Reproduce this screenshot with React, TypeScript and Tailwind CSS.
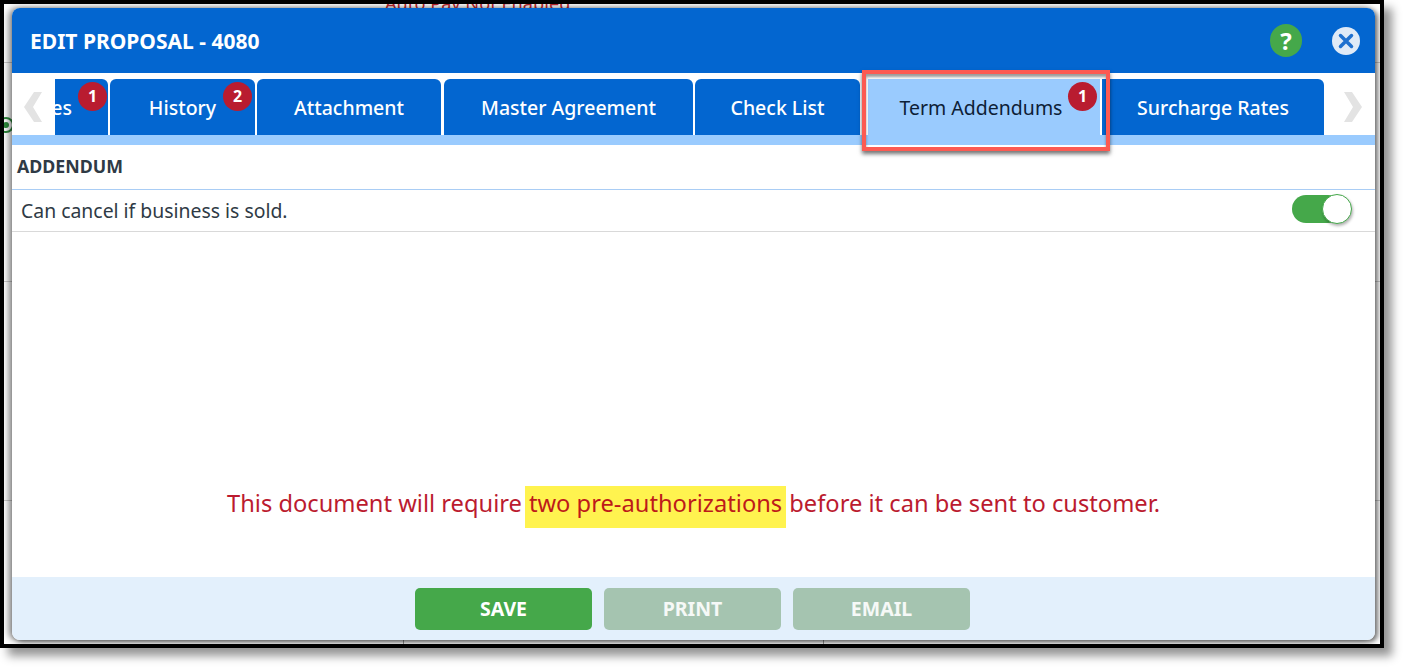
const TABS = [
  { label: "History", width: "w-[145px]", badge: "2", badgeClass: "left-[113px]" },
  { label: "Attachment", width: "w-[184px]" },
  { label: "Master Agreement", width: "ml-px w-[249px]" },
  { label: "Check List", width: "w-[165px]" },
];

function Badge({ value, className }: { value: string; className: string }) {
  return (
    <span
      className={`absolute top-[3px] flex h-[29px] w-[29px] items-center justify-center rounded-full bg-[#b91c30] pb-[2px] text-[16px] font-bold text-white ${className}`}
    >
      {value}
    </span>
  );
}

function Chevron({ flip }: { flip?: boolean }) {
  return (
    <svg width="18" height="30" viewBox="0 0 18 30" className={flip ? "rotate-180" : ""}>
      <path d="M10 0H18L9 15 18 30H10L0 15Z" fill="#e3e3e3" />
    </svg>
  );
}

function FooterButton({ label, disabled }: { label: string; disabled?: boolean }) {
  return (
    <button
      className={`h-[42px] w-[177px] rounded-[5px] text-[19.5px] font-bold ${
        disabled ? "bg-[#a5c4b0] text-white/90" : "bg-[#45a84a] text-white"
      }`}
    >
      {label}
    </button>
  );
}

export default function App() {
  return (
    <div className="h-[668px] w-[1404px] overflow-hidden bg-white font-['Noto_Sans','Open_Sans',sans-serif]">
      <div className="relative h-[648px] w-[1384px] overflow-hidden border-4 border-black bg-white px-2 pt-1 pb-1 shadow-[8px_8px_9px_rgba(0,0,0,0.42)]">
        {/* page behind the dialog */}
        <span className="absolute top-[-14px] left-[381px] text-[18.2px] whitespace-nowrap text-[#c0272d]">
          Auto Pay Not Enabled
        </span>
        <span className="absolute top-[113px] left-[-6px] flex h-[16px] w-[16px] items-center justify-center rounded-full border-[2px] border-[#2e8b3d] bg-white">
          <span className="h-[6px] w-[6px] rounded-full bg-[#2e8b3d]" />
        </span>
        <span className="absolute top-[58px] left-0 h-px w-full bg-[#cccccc]" />
        <span className="absolute top-[277px] left-0 h-px w-full bg-[#cccccc]" />
        <span className="absolute top-[496px] left-0 h-px w-full bg-[#cccccc]" />
        <span className="absolute top-[636px] left-[399px] h-[4px] w-px bg-[#999999]" />
        <span className="absolute top-[636px] left-[819px] h-[4px] w-px bg-[#999999]" />

        <div className="relative flex h-[632px] w-[1363px] flex-col overflow-hidden rounded-[8px] bg-white shadow-[-3px_0_7px_rgba(0,0,0,0.5),3px_2px_5px_rgba(0,0,0,0.5)]">
          <header className="flex h-[65px] shrink-0 items-center justify-between bg-[#0366d0] pr-[15px] pl-[18px]">
            <h1 className="pt-[2px] text-[21px] font-bold text-white">EDIT PROPOSAL - 4080</h1>
            <div className="flex items-center gap-[30px]">
              <span className="flex h-[33px] w-[32px] items-center justify-center rounded-full bg-[#45a84a] text-[24px] font-bold text-white">
                ?
              </span>
              <svg width="28" height="28" viewBox="0 0 28 28">
                <circle cx="14" cy="14" r="14" fill="#dfeaf7" />
                <path d="M8.5 8.5 19.5 19.5M19.5 8.5 8.5 19.5" stroke="#1f70cf" strokeWidth="3.5" strokeLinecap="round" />
              </svg>
            </div>
          </header>

          <nav className="flex h-[62px] shrink-0 items-end">
            <div className="flex h-[56px] w-[43px] shrink-0 items-center justify-center pr-[1px]">
              <Chevron />
            </div>
            <div className="flex h-[56px] w-[1269px] gap-[2px] overflow-hidden">
              <div className="relative ml-[-88px] flex w-[141px] shrink-0 items-center justify-end rounded-tr-[6px] bg-[#0366d0] pt-px pr-[36px] text-[19.5px] font-medium text-white">
                Notes
                <Badge value="1" className="left-[111px]" />
              </div>
              {TABS.map((tab) => (
                <div
                  key={tab.label}
                  className={`relative flex shrink-0 items-center justify-center rounded-t-[6px] bg-[#0366d0] pt-px text-[19.5px] font-medium text-white ${tab.width}`}
                >
                  {tab.label}
                  {tab.badge && <Badge value={tab.badge} className={tab.badgeClass ?? ""} />}
                </div>
              ))}
              <div className="relative ml-[6px] flex w-[232px] shrink-0 items-center justify-center bg-[#9aCBFE] pt-px pr-[6px] text-[19.5px] text-[#0d2036]">
                Term Addendums
                <Badge value="1" className="left-[200px]" />
              </div>
              <div className="flex w-[222px] shrink-0 items-center justify-center rounded-tr-[6px] bg-[#0366d0] pt-px text-[19.5px] font-medium text-white">
                Surcharge Rates
              </div>
            </div>
            <div className="flex h-[56px] flex-1 items-center justify-center pl-[6px]">
              <Chevron flip />
            </div>
          </nav>
          <div className="h-[10px] shrink-0 bg-[#9aCBFE]" />

          <div className="flex h-[45px] shrink-0 items-center border-b border-[#a9cdf5] pb-[2px] pl-[5px] text-[17.8px] font-bold text-[#2f3a45]">
            ADDENDUM
          </div>
          <div className="flex h-[42px] shrink-0 items-center justify-between border-b border-[#d9d9d9] pr-[23px] pl-[9px] text-[19.4px] text-[#2f3a45]">
            <span>Can cancel if business is sold.</span>
            <span className="relative mt-[-3px] h-[28px] w-[60px]">
              <span className="absolute top-0 left-0 h-[28px] w-[50px] rounded-full bg-[#45a84a]" />
              <span className="absolute top-[-1px] right-0 h-[30px] w-[30px] rounded-full border border-[#45a84a] bg-white shadow-[1px_2px_3px_rgba(0,0,0,0.3)]" />
            </span>
          </div>

          <div className="flex flex-1 items-end justify-center pb-[49px] text-[23.7px] leading-[34px] text-[#bb1b2f]">
            <p className="flex items-start whitespace-nowrap">
              <span>This document will require</span>
              <mark className="mx-[3px] h-[42px] bg-[#fff34f] px-[4px] text-[#bd1a1a]">two pre-authorizations</mark>
              <span>before it can be sent to customer.</span>
            </p>
          </div>

          <footer className="flex h-[63px] shrink-0 items-start justify-center gap-[12px] bg-[#e3f0fc] pt-[11px] pr-[2px]">
            <FooterButton label="SAVE" />
            <FooterButton label="PRINT" disabled />
            <FooterButton label="EMAIL" disabled />
          </footer>

          {/* red annotation round the active tab */}
          <div className="absolute top-[62px] left-[850px] h-[81px] w-[248px] border-[4px] border-[#fc5a52] shadow-[0_3px_4px_rgba(0,0,0,0.55),inset_0_3px_3px_rgba(0,0,0,0.4)]" />
        </div>
      </div>
    </div>
  );
}
